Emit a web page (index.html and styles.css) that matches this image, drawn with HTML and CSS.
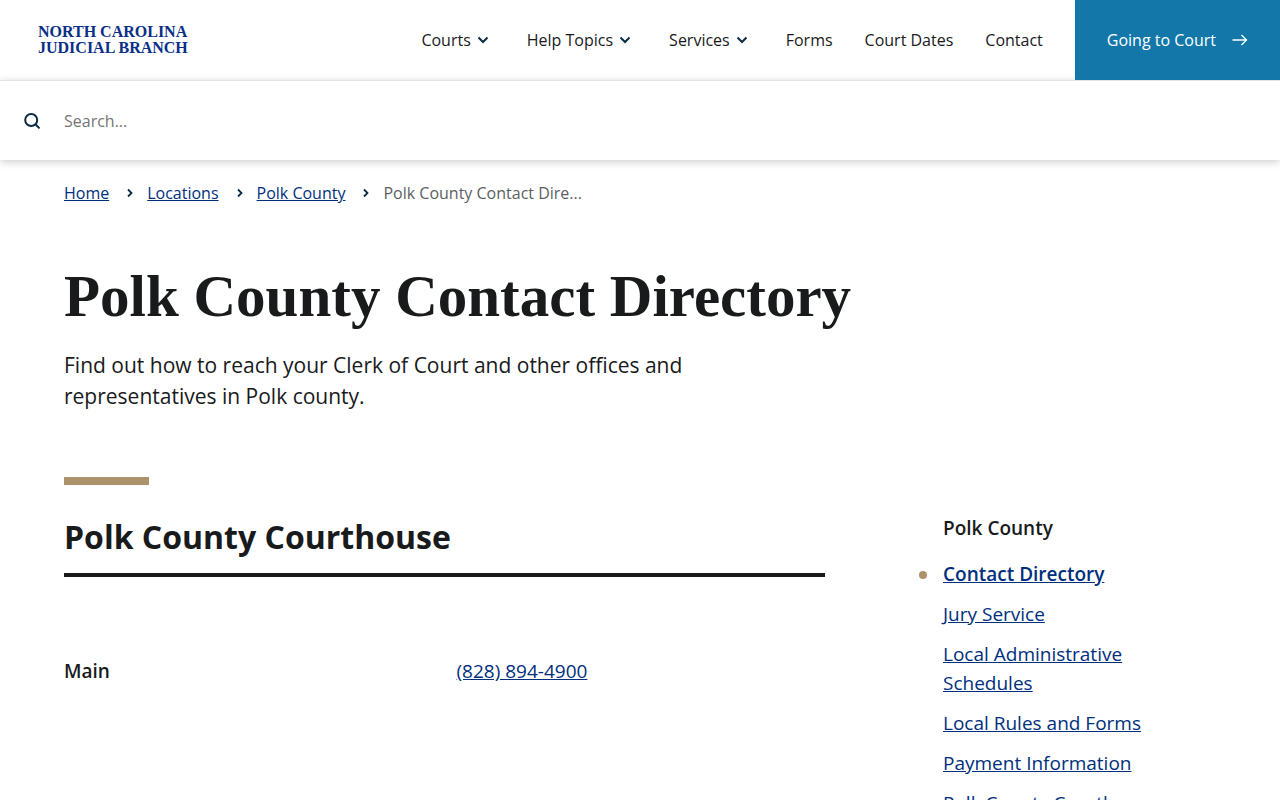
FILE: index.html
```html
<!DOCTYPE html>
<html lang="en">
<head>
<meta charset="utf-8">
<meta name="viewport" content="width=device-width, initial-scale=1">
<title>Polk County Contact Directory</title>
<link rel="stylesheet" href="styles.css">
</head>
<body>
<header class="header">
  <a class="logo" href="#">NORTH CAROLINA<br>JUDICIAL BRANCH</a>
  <nav class="nav" aria-label="Main">
    <button class="nav-item" type="button">Courts<svg class="chevron" viewBox="0 0 12 8" aria-hidden="true"><path d="M1.500 1.500 6 6l4.500-4.500"/></svg></button>
    <button class="nav-item" type="button">Help Topics<svg class="chevron" viewBox="0 0 12 8" aria-hidden="true"><path d="M1.500 1.500 6 6l4.500-4.500"/></svg></button>
    <button class="nav-item" type="button">Services<svg class="chevron" viewBox="0 0 12 8" aria-hidden="true"><path d="M1.500 1.500 6 6l4.500-4.500"/></svg></button>
    <a class="nav-item" href="#">Forms</a>
    <a class="nav-item" href="#">Court Dates</a>
    <a class="nav-item" href="#">Contact</a>
  </nav>
  <a class="cta" href="#">Going to Court<svg class="arrow" viewBox="0 0 16 12" aria-hidden="true"><path d="M.5 6h14M9.500 1l5 5-5 5"/></svg></a>
</header>
<form class="search" role="search">
  <button class="search-button" type="button" aria-label="Search"><svg class="search-icon" viewBox="0 0 16 16" aria-hidden="true"><circle cx="7.200" cy="7" r="6"/><path d="m11.400 11.200 4.200 4.200"/></svg></button>
  <input class="search-input" type="text" placeholder="Search..." aria-label="Search">
</form>
<main class="page">
  <nav aria-label="Breadcrumb">
    <ol class="crumbs">
      <li><a href="#">Home</a></li>
      <li><svg class="sep" viewBox="0 0 6 10" aria-hidden="true"><path d="m1 1.500 3.500 3.500L1 8.500"/></svg><a href="#">Locations</a></li>
      <li><svg class="sep" viewBox="0 0 6 10" aria-hidden="true"><path d="m1 1.500 3.500 3.500L1 8.500"/></svg><a href="#">Polk County</a></li>
      <li class="current"><svg class="sep" viewBox="0 0 6 10" aria-hidden="true"><path d="m1 1.500 3.500 3.500L1 8.500"/></svg>Polk County Contact Dire...</li>
    </ol>
  </nav>
  <h1 class="title">Polk County Contact Directory</h1>
  <p class="intro">Find out how to reach your Clerk of Court and other offices and representatives in Polk county.</p>
  <div class="accent"></div>
  <div class="columns">
    <section>
      <h2 class="section-title">Polk County Courthouse</h2>
      <dl class="contact">
        <dt>Main</dt>
        <dd><a href="#">(828) 894-4900</a></dd>
      </dl>
    </section>
    <aside class="sidebar">
      <h3 class="side-title">Polk County</h3>
      <ul class="side-list">
        <li class="active"><a href="#">Contact Directory</a></li>
        <li><a href="#">Jury Service</a></li>
        <li><a href="#">Local Administrative Schedules</a></li>
        <li><a href="#">Local Rules and Forms</a></li>
        <li><a href="#">Payment Information</a></li>
        <li><a href="#">Polk County Courthouse</a></li>
      </ul>
    </aside>
  </div>
</main>
</body>
</html>
```
FILE: styles.css
```css
* { box-sizing: border-box; }
body {
  margin: 0;
  background: #fff;
  color: #181a1b;
  font: 16px/24px "Open Sans", "Noto Sans", sans-serif;
}
a { color: #002f7d; text-underline-offset: 1px; }
button, input { font: inherit; }
button { padding: 0; border: 0; background: none; cursor: pointer; }
svg { fill: none; stroke: #0b2c43; flex: none; }

.header { display: flex; align-items: center; height: 80px; }
.logo {
  margin-left: 38px;
  color: #0a2f86;
  font: bold 16px/16px "Liberation Serif", serif;
  text-decoration: none;
  white-space: nowrap;
}
.nav { display: flex; gap: 32px; margin-left: auto; padding: 0 32px; }
.nav-item {
  display: flex;
  align-items: center;
  color: #181a1b;
  text-decoration: none;
  white-space: nowrap;
}
.chevron { width: 12px; height: 8px; margin: 0 6px; stroke-width: 2; }
.cta {
  position: relative;
  z-index: 1;
  display: flex;
  align-items: center;
  gap: 16px;
  align-self: stretch;
  padding: 0 32px;
  background: #1477aa;
  color: #fff;
  font-weight: 500;
  text-decoration: none;
  white-space: nowrap;
}
.arrow { width: 16px; height: 12px; stroke: #fff; stroke-width: 1.3; }

.search {
  display: flex;
  align-items: center;
  gap: 24px;
  height: 80px;
  padding: 0 24px;
  border-top: 1px solid #e3e3e3;
  box-shadow: 0 2px 8px rgba(0, 0, 0, .2);
}
.search-button { display: flex; }
.search-icon { width: 16px; height: 16px; stroke-width: 2; }
.search-input { flex: 1; padding: 0; border: 0; outline: 0; }
.search-input::placeholder { color: #757575; opacity: 1; }

.page { padding: 21px 64px 64px; }
.crumbs { display: flex; margin: 0; padding: 0; list-style: none; }
.crumbs li { display: flex; align-items: center; }
.sep { width: 6px; height: 10px; margin: 0 14px 0 18px; stroke-width: 1.8; }
.current { color: #5c5f61; }
.title { margin: 59px 0 0; font: bold 59px/64px "Liberation Serif", serif; }
.intro { max-width: 660px; margin: 22px 0 0; font-size: 21px; line-height: 31px; }
.accent { width: 85px; height: 8px; margin-top: 65px; background: #ae926c; }
.columns { display: grid; grid-template-columns: minmax(0, 761fr) minmax(0, 391fr); font-size: 19px; line-height: 29px; }
.section-title {
  margin: 0;
  padding: 30px 0 14px;
  border-bottom: 4px solid #181a1b;
  font-size: 32px;
  line-height: 44px;
}
.contact { display: grid; grid-template-columns: 1fr 1fr; gap: 24px; margin: 80px 0 0; }
.contact dt { font-weight: 600; }
.contact dd { margin: 0; }
.sidebar { padding: 29px 24px 0 118px; }
.side-title { margin: 0 0 17px; font-size: 19px; font-weight: 600; }
.side-list { display: grid; gap: 11px; margin: 0; padding: 0; list-style: none; }
.active { display: flex; align-items: center; font-weight: 600; }
.active::before {
  content: "";
  width: 8px;
  height: 8px;
  margin: 0 16px 0 -24px;
  border-radius: 50%;
  background: #ae926c;
}
```
